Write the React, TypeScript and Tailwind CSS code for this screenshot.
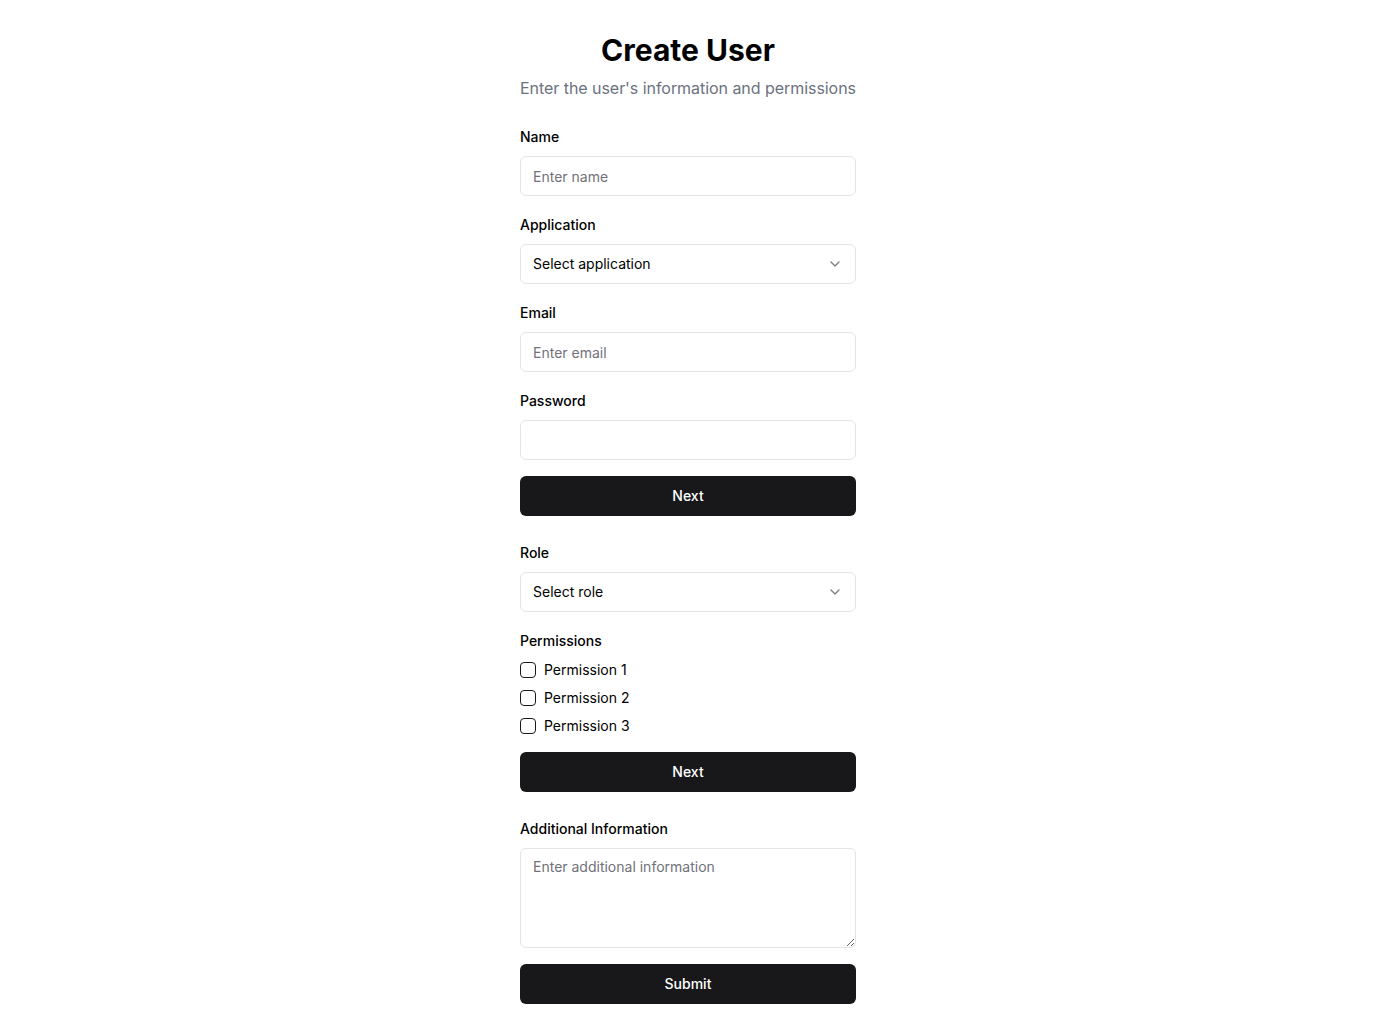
import React, { useState } from 'react';
import { ChevronDown } from 'lucide-react';

const labelCls = 'block text-sm font-medium leading-5 text-black mb-[9px]';
const inputCls =
  'w-full h-10 rounded-md border border-[#e4e4e7] bg-white px-3 text-sm text-black placeholder:text-[#71717a] outline-none';
const buttonCls =
  'w-full h-10 rounded-md bg-[#18181b] text-white text-sm font-medium flex items-center justify-center';

const SelectBox: React.FC<{ placeholder: string }> = ({ placeholder }) => (
  <button type="button" className={inputCls + ' flex items-center justify-between text-left'}>
    <span>{placeholder}</span>
    <ChevronDown className="h-4 w-4 opacity-50" />
  </button>
);

const App: React.FC = () => {
  const [perms, setPerms] = useState<boolean[]>([false, false, false]);

  return (
    <div className="min-h-screen bg-white pt-8 pb-8" style={{ fontFamily: 'Inter, "Noto Sans", sans-serif' }}>
      <div className="mx-auto w-[336px]">
        <h1 className="text-center text-3xl font-bold leading-9 text-black">Create User</h1>
        <p className="-mx-4 mt-2 whitespace-nowrap text-center text-base leading-6 tracking-[-0.05px] text-[#6b7280]">
          Enter the user's information and permissions
        </p>

        <div className="mt-[27px]">
          <label className={labelCls}>Name</label>
          <input className={inputCls} placeholder="Enter name" />
        </div>
        <div className="mt-[19px]">
          <label className={labelCls}>Application</label>
          <SelectBox placeholder="Select application" />
        </div>
        <div className="mt-[19px]">
          <label className={labelCls}>Email</label>
          <input className={inputCls} placeholder="Enter email" />
        </div>
        <div className="mt-[19px]">
          <label className={labelCls}>Password</label>
          <input type="password" className={inputCls} />
        </div>
        <button type="button" className={buttonCls + ' mt-4'}>Next</button>

        <div className="mt-[27px]">
          <label className={labelCls}>Role</label>
          <SelectBox placeholder="Select role" />
        </div>
        <div className="mt-[19px]">
          <label className="block text-sm font-medium leading-5 text-black">Permissions</label>
          <div className="mt-[9px] flex flex-col gap-2">
            {['Permission 1', 'Permission 2', 'Permission 3'].map((p, i) => (
              <label key={p} className="flex items-center gap-2 text-sm leading-5 text-black">
                <button
                  type="button"
                  onClick={() => setPerms(perms.map((v, j) => (j === i ? !v : v)))}
                  className="h-4 w-4 rounded-[4px] border border-[#18181b] bg-white"
                />
                {p}
              </label>
            ))}
          </div>
        </div>
        <button type="button" className={buttonCls + ' mt-4'}>Next</button>

        <div className="mt-[27px]">
          <label className={labelCls}>Additional Information</label>
          <textarea
            className="block w-full h-[100px] rounded-md border border-[#e4e4e7] bg-white px-3 py-2 text-sm leading-5 text-black placeholder:text-[#71717a] outline-none"
            placeholder="Enter additional information"
          />
        </div>
        <button type="button" className={buttonCls + ' mt-4'}>Submit</button>
      </div>
    </div>
  );
};

export default App;
